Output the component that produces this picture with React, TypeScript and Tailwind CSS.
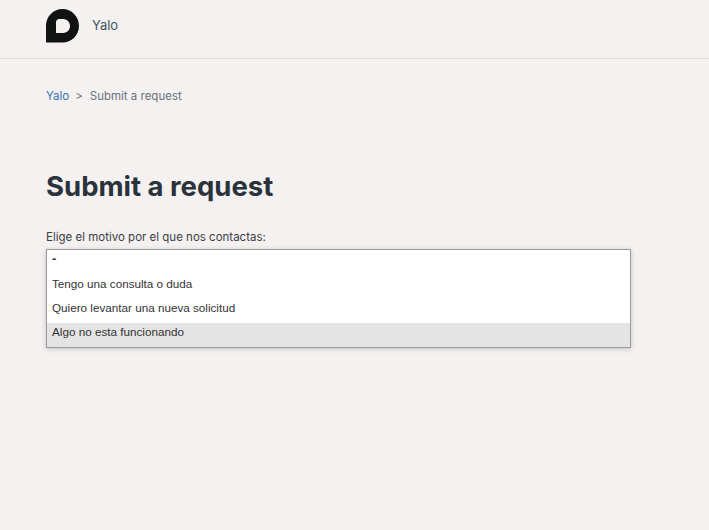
export default function App() {
  return (
    <div className="min-h-[530px] bg-[#f5f1f1] font-['Inter',sans-serif] text-[#2f3941]">
      <header className="h-[59px] border-b border-[#dfdcdc] px-[46px] flex items-center gap-[13px]">
        <svg width="33" height="34" viewBox="0 0 33 34" className="mb-[8px] mt-[1px]">
          <path fillRule="evenodd" fill="#111312" d="M16.5 0C25.5 0 33 7.5 33 17C33 26 25.5 33.5 16.5 33.5H0V16.5C0 7.5 7.5 0 16.5 0ZM17 10H13C11.5 10 10 11.5 10 13V24H17C21 24 24 21 24 17C24 13 21 10 17 10Z" />
        </svg>
        <span className="text-[13px] text-[#3d5560] mb-[6px]">Yalo</span>
      </header>
      <main className="px-[46px]">
        <nav className="mt-[30px] h-[15px] flex items-center text-[11.5px] leading-[15px] text-[#68737d]">
          <span className="text-[#2f72b0]">Yalo</span>
          <span className="ml-[6px] mr-[7px]">&gt;</span>
          <span>Submit a request</span>
        </nav>
        <h1 className="mt-[64px] text-[27.5px] leading-[36px] font-bold text-[#2a333b]">Submit a request</h1>
        <label className="block mt-[26px] text-[11.5px] leading-[15px] text-[#3a3f44]">Elige el motivo por el que nos contactas:</label>
        <div className="mt-[4px] w-[585px] h-[99px] border border-[#9a9a9a] bg-white shadow-[0_1px_5px_rgba(0,0,0,0.2)] flex flex-col font-['Liberation_Sans',sans-serif] text-[11.7px] text-[#333333]">
          <div className="h-[22px] px-[5px] flex items-center font-bold text-[13px] pb-[4px]">-</div>
          <div className="h-[24px] px-[5px] flex items-center">Tengo una consulta o duda</div>
          <div className="h-[24px] mb-[3px] px-[5px] flex items-center">Quiero levantar una nueva solicitud</div>
          <div className="flex-1 bg-[#e4e4e4] px-[5px] pb-[6px] flex items-center">Algo no esta funcionando</div>
        </div>
      </main>
    </div>
  );
}
